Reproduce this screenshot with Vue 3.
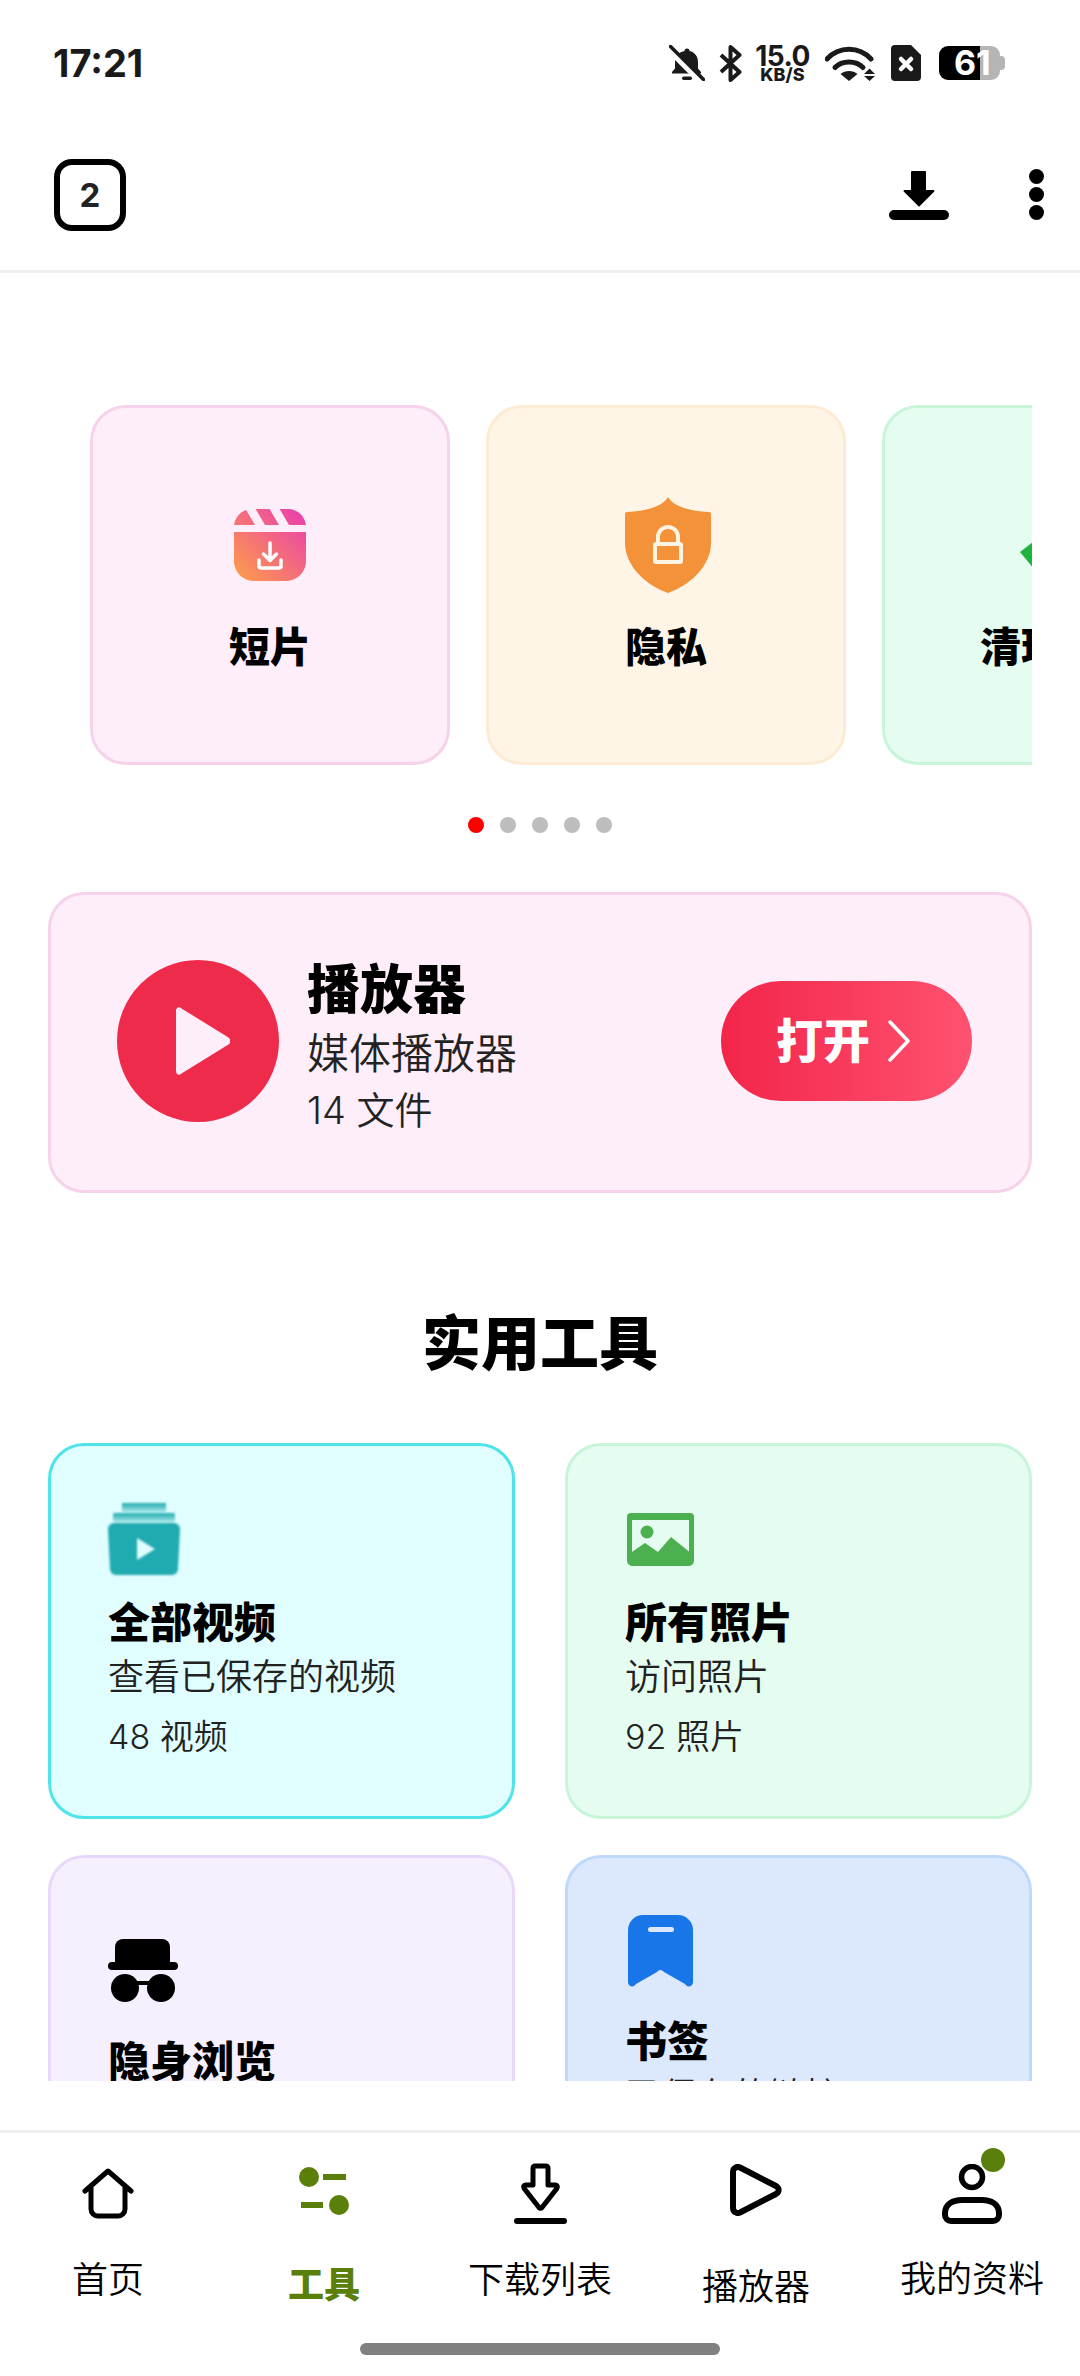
<script setup>
const slides = [
  { key: 'pink', label: '短片' },
  { key: 'orange', label: '隐私' },
  { key: 'green', label: '清理文件' }
]
const dots = [0, 1, 2, 3, 4]
</script>

<template>
  <div class="app">
    <header class="status">
      <span class="time">17:21</span>
      <div class="status-icons">
        <svg class="bell" width="36" height="36" viewBox="0 0 36 36">
          <path d="M18 3.5a2.6 2.6 0 0 1 2.6 2.4c5.4 1.3 8.4 5.6 8.4 11v6.6l3 3.500v1.500H3V27l3-3.500V17c0-5.400 3-9.700 9.400-11.100A2.600 2.600 0 0 1 18 3.500Z" fill="#1a1a1a"/>
          <rect x="13" y="31.500" width="10" height="3.500" rx="1.700" fill="#1a1a1a"/>
          <path d="M1 5L33 37" stroke="#fff" stroke-width="7"/>
          <path d="M1.500 1.500L34.500 34.500" stroke="#1a1a1a" stroke-width="3.600" stroke-linecap="round"/>
        </svg>
        <svg class="bt" width="23" height="37" viewBox="0 0 23 37">
          <path d="M2 10L20.500 27L11.500 35V2L20.500 10L2 27" fill="none" stroke="#1a1a1a" stroke-width="4" stroke-linejoin="round"/>
        </svg>
        <div class="speed"><span class="speed-num">15.0</span><span class="speed-unit">KB/S</span></div>
        <svg class="wifi" width="50" height="36" viewBox="0 0 50 36">
          <path d="M2 14C14 1 34 1 46 14" fill="none" stroke="#1a1a1a" stroke-width="5" stroke-linecap="round"/>
          <path d="M10 22.500C17 15 31 15 38 22.500" fill="none" stroke="#1a1a1a" stroke-width="5" stroke-linecap="round"/>
          <path d="M15.500 29C20 25 28 25 32.500 29L24 36Z" fill="#1a1a1a"/>
          <path d="M39 29L44.500 23.500L50 29ZM39 31H50L44.500 36Z" fill="#1a1a1a"/>
        </svg>
        <svg class="sim" width="30" height="36" viewBox="0 0 30 36">
          <path d="M4 0H20L30 10V32a4 4 0 0 1-4 4H4a4 4 0 0 1-4-4V4a4 4 0 0 1 4-4Z" fill="#1a1a1a"/>
          <path d="M10 14L20 24M20 14L10 24" stroke="#fff" stroke-width="4.500" stroke-linecap="round"/>
        </svg>
        <div class="battery"><span class="battery-num">61</span></div>
      </div>
    </header>

    <nav class="toolbar">
      <div class="tab-count">2</div>
      <div class="toolbar-actions">
        <svg width="60" height="50" viewBox="0 0 60 50">
          <path d="M22 2a1 1 0 0 1 1-1h13a1 1 0 0 1 1 1v18h7.500a1 1 0 0 1 .8 1.600L30.800 36a1 1 0 0 1-1.600 0L14.700 21.600a1 1 0 0 1 .8-1.600H22Z" fill="#000"/>
          <rect x="0" y="40" width="60" height="10" rx="5" fill="#000"/>
        </svg>
        <div class="more"><i></i><i></i><i></i></div>
      </div>
    </nav>

    <main class="content">
      <section class="carousel">
        <article v-for="s in slides" :key="s.key" class="slide" :class="s.key">
          <div class="slide-icon">
            <svg v-if="s.key === 'pink'" width="72" height="72" viewBox="0 0 72 72">
              <defs>
                <linearGradient id="reel" x1="0" y1="1" x2="1" y2="0">
                  <stop offset="0" stop-color="#ff9f48"/>
                  <stop offset="1" stop-color="#e83bb0"/>
                </linearGradient>
              </defs>
              <path d="M0 16V18C0 8 8 0 18 0H54C64 0 72 8 72 18V16ZM0 23H72V52C72 63 63 72 52 72H20C9 72 0 63 0 52Z" fill="url(#reel)"/>
              <path d="M11 -1L21 16H31L21 -1ZM35 -1L45 16H55L45 -1Z" fill="#fdeef9"/>
              <path d="M36 34V51M29.500 45L36 51.500L42.500 45M25 51V57a2 2 0 0 0 2 2H45a2 2 0 0 0 2-2V51" fill="none" stroke="#fff" stroke-width="3.500" stroke-linecap="round" stroke-linejoin="round"/>
            </svg>
            <svg v-else-if="s.key === 'orange'" width="86" height="96" viewBox="0 0 86 96">
              <path d="M43 0C47 8 62 14 84 15a2 2 0 0 1 2 2V46C86 68 66 88 43 96C20 88 0 68 0 46V17a2 2 0 0 1 2-2C24 14 39 8 43 0Z" fill="#f4923a"/>
              <path d="M33 47V40a10 10 0 0 1 20 0V47" fill="none" stroke="#fff3e3" stroke-width="4"/>
              <rect x="30" y="47" width="26" height="18" rx="1" fill="none" stroke="#fff3e3" stroke-width="4"/>
            </svg>
            <svg v-else width="86" height="72" viewBox="0 0 86 72">
              <path d="M1 21L43 -11L86 20L43 72Z" fill="#1db53c"/>
            </svg>
          </div>
          <h3 class="slide-label">{{ s.label }}</h3>
        </article>
      </section>

      <div class="dots">
        <span v-for="d in dots" :key="d" class="dot" :class="{ on: d === 0 }"></span>
      </div>

      <section class="player">
        <div class="player-disc">
          <svg width="54" height="68" viewBox="0 0 54 68">
            <path d="M0 4C0 .5 3-1 5.500 1.500L52.500 30.500C55 32.500 55 35.500 52.500 37.500L5.500 66.500C3 69 0 67.500 0 64Z" fill="#fdeef9"/>
          </svg>
        </div>
        <div class="player-text">
          <h2>播放器</h2>
          <p class="player-sub">媒体播放器</p>
          <p class="player-count">14 文件</p>
        </div>
        <button class="open">
          <span>打开</span>
          <svg width="24" height="42" viewBox="0 0 24 42">
            <path d="M3 2L21 21L3 40" fill="none" stroke="#fff" stroke-width="3.500" stroke-linecap="round" stroke-linejoin="round"/>
          </svg>
        </button>
      </section>

      <h2 class="section-title">实用工具</h2>

      <section class="tools">
        <article class="tool video">
          <svg class="soft" width="72" height="72" viewBox="0 0 72 72">
            <defs>
              <linearGradient id="b1" x1="0" y1="0" x2="0" y2="1"><stop offset="0" stop-color="#1fabaf"/><stop offset="1" stop-color="#a5e6e8"/></linearGradient>
            </defs>
            <rect x="14" y="0" width="44" height="9" fill="url(#b1)"/>
            <rect x="5" y="10" width="62" height="9" rx="2" fill="url(#b1)"/>
            <path d="M6 20H66a6 6 0 0 1 6 6L70 66a6 6 0 0 1-6 6H8a6 6 0 0 1-6-6L0 26a6 6 0 0 1 6-6Z" fill="#1fabaf"/>
            <path d="M29 35L47 46L29 57Z" fill="#e0fdff"/>
          </svg>
          <h3>全部视频</h3>
          <p class="tool-sub">查看已保存的视频</p>
          <p class="tool-count">48 视频</p>
        </article>
        <article class="tool photo">
          <svg width="67" height="53" viewBox="0 0 67 53">
            <rect x="2.500" y="3" width="62" height="47.500" rx="3" fill="none" stroke="#4caf50" stroke-width="5"/>
            <rect x="0" y="0" width="67" height="7" rx="4" fill="#4caf50"/>
            <circle cx="20" cy="19" r="6.500" fill="#4caf50"/>
            <path d="M2 41L18 30L31 39L44 24L65 41V50H2Z" fill="#4caf50"/>
          </svg>
          <h3>所有照片</h3>
          <p class="tool-sub">访问照片</p>
          <p class="tool-count">92 照片</p>
        </article>
        <article class="tool incognito">
          <svg width="70" height="63" viewBox="0 0 70 63">
            <path d="M7 23V8a8 8 0 0 1 8-8H54a8 8 0 0 1 8 8V23Z" fill="#000"/>
            <rect x="0" y="23" width="70" height="8" rx="4" fill="#000"/>
            <circle cx="17" cy="49" r="14" fill="#000"/>
            <circle cx="53" cy="49" r="14" fill="#000"/>
            <rect x="28" y="42" width="14" height="4" fill="#000"/>
          </svg>
          <h3>隐身浏览</h3>
        </article>
        <article class="tool bookmark">
          <svg width="65" height="72" viewBox="0 0 65 72">
            <path d="M0 15A15 15 0 0 1 15 0H50A15 15 0 0 1 65 15V67C65 72 59 73 57 69L36 57Q32.500 53 29 57L8 69C6 73 0 72 0 67Z" fill="#1976e8"/>
            <rect x="20" y="12" width="26" height="5" rx="2.500" fill="#dce9fd"/>
          </svg>
          <h3>书签</h3>
          <p class="tool-sub">已保存的链接</p>
        </article>
      </section>
    </main>

    <footer class="tabbar">
      <div class="tabs">
        <div class="tab t-home">
          <svg width="52" height="51" viewBox="0 0 52 51">
            <path d="M3 23L26 3L49 23M9 18V41a7 7 0 0 0 7 7H36a7 7 0 0 0 7-7V18" fill="none" stroke="#000" stroke-width="5" stroke-linecap="round" stroke-linejoin="round"/>
          </svg>
          <span>首页</span>
        </div>
        <div class="tab t-tools">
          <svg width="50" height="48" viewBox="0 0 50 48">
            <circle cx="10" cy="10" r="10" fill="#5b7f0b"/>
            <rect x="24" y="7" width="23" height="6" fill="#5b7f0b"/>
            <circle cx="40" cy="38" r="10" fill="#5b7f0b"/>
            <rect x="2" y="35" width="22" height="6" fill="#5b7f0b"/>
          </svg>
          <span class="active">工具</span>
        </div>
        <div class="tab t-down">
          <svg width="53" height="61" viewBox="0 0 53 61">
            <path d="M19 5a2 2 0 0 1 2-2h11a2 2 0 0 1 2 2V22h7.500a2 2 0 0 1 1.500 3.200L28 44.500a2 2 0 0 1-3 0L10 25.200A2 2 0 0 1 11.500 22H19Z" fill="none" stroke="#000" stroke-width="5" stroke-linejoin="round"/>
            <rect x="0" y="55" width="53" height="6" rx="3" fill="#000"/>
          </svg>
          <span>下载列表</span>
        </div>
        <div class="tab t-play">
          <svg width="52" height="52" viewBox="0 0 52 52">
            <path d="M3 8C3 4 7 1.500 11 4L46 22C49.500 24 49.500 28 46 30L11 48C7 50.500 3 48 3 44Z" fill="none" stroke="#000" stroke-width="6" stroke-linejoin="round"/>
          </svg>
          <span>播放器</span>
        </div>
        <div class="tab t-me">
          <div class="me-icon">
            <svg width="60" height="60" viewBox="0 0 60 60">
              <circle cx="30" cy="13" r="10.500" fill="none" stroke="#000" stroke-width="5.500"/>
              <path d="M3 49C3 40 11 36 20 36H40C49 36 57 40 57 49V51a6 6 0 0 1-6 6H9a6 6 0 0 1-6-6Z" fill="none" stroke="#000" stroke-width="6" stroke-linejoin="round"/>
            </svg>
            <i class="me-dot"></i>
          </div>
          <span>我的资料</span>
        </div>
      </div>
      <div class="home-pill"></div>
    </footer>
  </div>
</template>

<style scoped>
.app {
  width: 1080px;
  height: 2376px;
  display: flex;
  flex-direction: column;
  overflow: hidden;
  background: #fff;
  color: #000;
  font-family: Inter, "Noto Sans CJK SC", sans-serif;
}
h2, h3, p { margin: 0; }

.status {
  height: 110px;
  flex: none;
  box-sizing: border-box;
  padding: 40px 80px 24px 53px;
  display: flex;
  align-items: center;
  justify-content: space-between;
}
.time { font-size: 38px; font-weight: 700; color: #1a1a1a; line-height: 46px; }
.status-icons { display: flex; align-items: center; }
.status-icons svg { display: block; flex: none; }
.bt { margin-left: 14px; }
.speed {
  margin-left: 15px;
  width: 51px;
  display: flex;
  flex-direction: column;
  align-items: center;
  color: #1a1a1a;
}
.speed-num { font-size: 28px; font-weight: 700; line-height: 22px; letter-spacing: -0.5px; }
.speed-unit { font-size: 18px; font-weight: 800; line-height: 15px; }
.wifi { margin-left: 17px; }
.sim { margin-left: 16px; }
.battery {
  margin-left: 18px;
  width: 61px;
  height: 34px;
  border-radius: 9px;
  background: linear-gradient(to right, #000 41px, #b5b5b5 41px);
  position: relative;
  color: #fff;
  font-size: 34px;
  font-weight: 700;
  line-height: 34px;
  padding-left: 15px;
  box-sizing: border-box;
  white-space: nowrap;
}
.battery::after {
  content: "";
  position: absolute;
  right: -5px;
  top: 10px;
  width: 5px;
  height: 14px;
  border-radius: 0 4px 4px 0;
  background: #b5b5b5;
}

.toolbar {
  height: 163px;
  flex: none;
  box-sizing: border-box;
  border-bottom: 3px solid #eeeeee;
  padding: 9px 36px 0 54px;
  display: flex;
  align-items: center;
  justify-content: space-between;
}
.tab-count {
  width: 72px;
  height: 72px;
  box-sizing: border-box;
  border: 6px solid #000;
  border-radius: 18px;
  display: flex;
  align-items: center;
  justify-content: center;
  font-size: 33px;
  font-weight: 700;
  color: #222;
}
.toolbar-actions { display: flex; align-items: center; gap: 80px; }
.toolbar-actions svg { display: block; }
.more { display: flex; flex-direction: column; gap: 3px; }
.more i { display: block; width: 15px; height: 15px; border-radius: 50%; background: #000; }

.content { height: 1808px; flex: none; overflow: hidden; }

.carousel {
  margin: 132px 48px 0;
  padding-left: 42px;
  display: flex;
  gap: 36px;
  overflow: hidden;
}
.slide {
  flex: none;
  width: 360px;
  height: 360px;
  box-sizing: border-box;
  border: 3px solid;
  border-radius: 36px;
  display: flex;
  flex-direction: column;
  align-items: center;
}
.slide.pink { background: #fdeef9; border-color: #f6d3ea; }
.slide.orange { background: #fff5e6; border-color: #fdebd3; }
.slide.green { background: #e5fdf0; border-color: #c8f5da; }
.slide-icon {
  height: 195px;
  display: flex;
  align-items: flex-end;
  justify-content: center;
}
.slide-icon svg { display: block; overflow: visible; }
.slide.pink .slide-icon { padding-bottom: 22px; height: 173px; }
.slide.orange .slide-icon { padding-bottom: 10px; height: 185px; padding-left: 4px; }
.slide-label {
  margin-top: 16px;
  font-size: 41px;
  font-weight: 900;
  line-height: 56px;
  white-space: nowrap;
}

.dots { margin-top: 52px; display: flex; justify-content: center; gap: 16px; }
.dot { width: 16px; height: 16px; border-radius: 50%; background: #bdbdbd; }
.dot.on { background: #ff0000; }

.player {
  margin: 59px 48px 0;
  height: 301px;
  box-sizing: border-box;
  border: 3px solid #f6d3ea;
  border-radius: 36px;
  background: #fdeef9;
  padding: 0 57px 3px 66px;
  display: flex;
  align-items: center;
}
.player-disc {
  width: 162px;
  height: 162px;
  flex: none;
  border-radius: 50%;
  background: #ef2b4b;
  display: flex;
  align-items: center;
  justify-content: center;
}
.player-disc svg { display: block; margin-left: 10px; }
.player-text { margin-left: 28px; flex: 1; padding-top: 12px; }
.player-text h2 { font-size: 53px; font-weight: 900; line-height: 68px; }
.player-sub { font-size: 42px; font-weight: 350; line-height: 56px; color: #222; margin-top: 2px; }
.player-count { font-size: 38px; font-weight: 350; line-height: 56px; color: #222; }
.open {
  width: 251px;
  height: 120px;
  flex: none;
  border: 0;
  border-radius: 60px;
  background: linear-gradient(to right, #f2254a, #ff5270);
  color: #fff;
  font-family: inherit;
  font-size: 47px;
  font-weight: 900;
  display: flex;
  align-items: center;
  padding: 0 0 0 55px;
  gap: 17px;
}
.open span { margin-bottom: 8px; }
.open svg { display: block; }

.section-title {
  margin-top: 111px;
  text-align: center;
  font-size: 59px;
  font-weight: 900;
  line-height: 80px;
}

.tools {
  margin: 59px 48px 0;
  display: grid;
  grid-template-columns: 467px 467px;
  grid-auto-rows: 376px;
  column-gap: 50px;
  row-gap: 36px;
}
.tool {
  box-sizing: border-box;
  border: 3px solid;
  border-radius: 36px;
  padding: 57px 20px 0 57px;
}
.tool svg { display: block; }
.tool h3 { font-size: 42px; font-weight: 900; line-height: 56px; white-space: nowrap; }
.tool-sub { font-size: 36px; font-weight: 350; line-height: 48px; margin-top: 2px; color: #222; white-space: nowrap; }
.tool-count { font-size: 34px; font-weight: 350; line-height: 48px; margin-top: 12px; color: #222; }
.soft { filter: blur(1px); }
.video { background: #e0fdff; border-color: #4fe3ea; }
.video h3 { margin-top: 20px; }
.photo { background: #e5fdf0; border-color: #c8f5da; padding-top: 67px; }
.photo svg { margin-left: 2px; }
.photo h3 { margin-top: 29px; }
.incognito { background: #f5effe; border-color: #e8d9fb; padding-top: 81px; }
.incognito h3 { margin-top: 32px; }
.bookmark { background: #dce9fd; border-color: #bfd9fb; }
.bookmark svg { margin-left: 3px; }
.bookmark h3 { margin-top: 27px; }

.tabbar { margin-top: 49px; flex: 1; border-top: 3px solid #eeeeee; }
.tabs { height: 210px; display: grid; grid-template-columns: repeat(5, 216px); }
.tab { display: flex; flex-direction: column; align-items: center; }
.tab svg { display: block; }
.tab span { font-size: 36px; font-weight: 350; line-height: 48px; white-space: nowrap; }
.tab span.active { color: #5b7f0b; font-weight: 900; }
.t-home > svg { margin-top: 35px; }
.t-home span { margin-top: 37px; }
.t-tools > svg { margin-top: 34px; }
.t-tools span { margin-top: 46px; }
.t-down > svg { margin-top: 30px; }
.t-down span { margin-top: 32px; }
.t-play > svg { margin-top: 31px; }
.t-play span { margin-top: 47px; }
.me-icon { margin-top: 31px; position: relative; }
.t-me span { margin-top: 31px; }
.me-dot {
  position: absolute;
  left: 39px;
  top: -16px;
  width: 24px;
  height: 24px;
  border-radius: 50%;
  background: #5b7f0b;
}
.home-pill { width: 360px; height: 12px; border-radius: 6px; background: #808080; margin: 0 auto; }
</style>
